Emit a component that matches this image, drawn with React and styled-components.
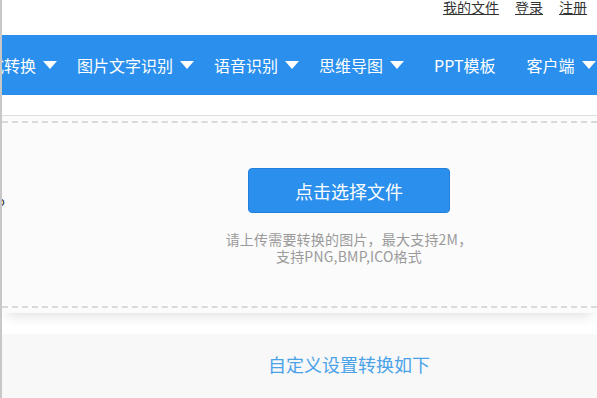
import styled, { createGlobalStyle } from 'styled-components';

const GlobalStyle = createGlobalStyle`
  html, body {
    margin: 0;
    padding: 0;
    background: #fff;
    overflow: hidden;
  }
  body {
    font-family: "Microsoft YaHei", "Noto Sans CJK SC", "Noto Sans", sans-serif;
  }
`;

const menu = [
  { label: '格式转换', drop: true },
  { label: '图片文字识别', drop: true },
  { label: '语音识别', drop: true },
  { label: '思维导图', drop: true },
  { label: 'PPT模板', drop: false },
  { label: '客户端', drop: true },
];

const Caret = () => (
  <CaretIcon viewBox="0 0 14 8" width="14" height="8">
    <path d="M0 0 H14 L7 8 Z" fill="#fff" />
  </CaretIcon>
);

const App = () => {
  return (
    <Page>
      <GlobalStyle />
      <TopBar>
        <TopLink href="#">我的文件</TopLink>
        <TopLink href="#">登录</TopLink>
        <TopLink href="#">注册</TopLink>
      </TopBar>

      <Nav>
        <NavList>
          {menu.map(item => (
            <NavItem key={item.label} plain={!item.drop}>
              {item.label}
              {item.drop && <Caret />}
            </NavItem>
          ))}
        </NavList>
      </Nav>

      <UploadPanel>
        <Clipped>o</Clipped>
        <DashedBox>
          <UploadButton type="button">点击选择文件</UploadButton>
          <Hint>
            <HintLine>请上传需要转换的图片，最大支持2M，</HintLine>
            <HintLine>支持PNG,BMP,ICO格式</HintLine>
          </Hint>
        </DashedBox>
      </UploadPanel>

      <Settings>
        <SettingsTitle>自定义设置转换如下</SettingsTitle>
      </Settings>
    </Page>
  );
};

const Page = styled.div`
  height: 100vh;
  border-left: 2px solid #c8c8c8;
  box-sizing: border-box;
  overflow: hidden;
`;

const TopBar = styled.div`
  display: flex;
  justify-content: flex-end;
  align-items: flex-start;
  gap: 16px;
  height: 35px;
  padding-right: 10px;
`;

const TopLink = styled.a`
  font-size: 14px;
  line-height: 14px;
  color: #333;
  text-decoration: underline;
`;

const Nav = styled.nav`
  height: 60px;
  background: #2b8fed;
  overflow: hidden;
`;

const NavList = styled.div`
  display: flex;
  align-items: center;
  gap: 20px;
  height: 100%;
  margin-left: -30px;
  white-space: nowrap;
`;

const NavItem = styled.div`
  display: flex;
  align-items: center;
  flex-shrink: 0;
  padding: ${p => (p.plain ? '0 11px 0 10px' : '0')};
  color: #fff;
  font-size: 16px;
`;

const CaretIcon = styled.svg`
  margin-left: 7px;
  display: block;
`;

const UploadPanel = styled.section`
  position: relative;
  margin-top: 20px;
  border-top: 1px solid #dddddd;
  background: #fbfbfb;
  padding: 5px 0;
  box-shadow: 0 8px 12px -5px rgba(0, 0, 0, 0.12);
`;

const Clipped = styled.span`
  position: absolute;
  left: -5px;
  top: 75px;
  font-size: 13px;
  color: #333;
`;

const DashedBox = styled.div`
  display: flex;
  flex-direction: column;
  align-items: center;
  border-top: 2px dashed #dadada;
  border-bottom: 2px dashed #dadada;
  padding: 45px 0 41px 99px;
`;

const UploadButton = styled.button`
  width: 202px;
  height: 45px;
  background: #2b8fed;
  border: 1px solid #2280dc;
  border-radius: 4px;
  color: #fff;
  font-family: inherit;
  font-size: 18px;
  cursor: pointer;
`;

const Hint = styled.div`
  display: flex;
  flex-direction: column;
  align-items: center;
  margin-top: 18px;
  font-size: 14px;
  color: #9a9a9a;
  letter-spacing: 0.2px;
`;

const HintLine = styled.span`
  display: block;
  height: 17px;
  line-height: 17px;
`;

const Settings = styled.section`
  margin-top: 21px;
  background: #f8f8f8;
  height: 80px;
  display: flex;
  justify-content: center;
  padding: 19px 0 0 99px;
`;

const SettingsTitle = styled.h3`
  margin: 0;
  font-size: 18px;
  font-weight: normal;
  line-height: 22px;
  color: #4aa2e8;
`;

export default App;
